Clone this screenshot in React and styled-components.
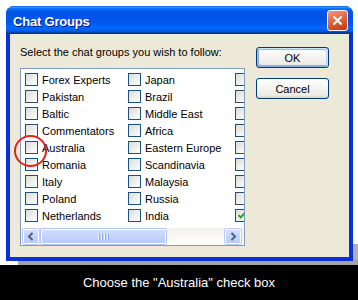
import React from 'react';
import styled, { createGlobalStyle } from 'styled-components';

const GlobalStyle = createGlobalStyle`
  html, body {
    margin: 0;
    padding: 0;
    background: #fff;
  }
  body {
    width: 358px;
    height: 300px;
    overflow: hidden;
    font-family: "Liberation Sans", Arial, sans-serif;
  }
`;

const Stage = styled.div`
  position: relative;
  height: 265px;
  padding: 6px 0 0 6px;
  box-sizing: border-box;
  background-color: #fff;
  background-image: linear-gradient(#a4a4a4, #a4a4a4), linear-gradient(#b0b0b0, #b0b0b0);
  background-repeat: no-repeat;
  background-position: 18px 259px, 353px 244px;
  background-size: 340px 6px, 5px 21px;
`;

const Window = styled.div`
  width: 347px;
  height: 255px;
  display: flex;
  flex-direction: column;
  background: #0831d9;
  border-radius: 8px 8px 0 0;
  overflow: hidden;
`;

const TitleBar = styled.div`
  height: 28px;
  flex: none;
  display: flex;
  align-items: center;
  justify-content: space-between;
  padding: 0 5px 0 7px;
  background: linear-gradient(
    180deg,
    #0058ee 0%,
    #3593ff 4%,
    #288eff 6%,
    #127dff 8%,
    #036ffc 10%,
    #0262ee 14%,
    #0057e5 20%,
    #0054e3 24%,
    #0055eb 56%,
    #005bf5 66%,
    #026afe 76%,
    #0062ef 86%,
    #0052d6 92%,
    #0040ab 94%,
    #003092 100%
  );
`;

const Title = styled.span`
  padding-top: 2px;
  color: #fff;
  font-size: 13px;
  font-weight: bold;
  letter-spacing: -0.2px;
  text-shadow: 1px 1px #0f1089;
`;

const CloseButton = styled.div`
  width: 21px;
  height: 21px;
  box-sizing: border-box;
  border: 1px solid #fff;
  border-radius: 3px;
  display: flex;
  align-items: center;
  justify-content: center;
  background: radial-gradient(circle at 90% 90%, #cc4600 0%, #dc6527 55%, #cd7546 70%, #ffccb2 90%, #fff 100%);
  background: linear-gradient(160deg, #f19a78 0%, #e06f48 40%, #cf4d24 75%, #b93812 100%);
`;

const Body = styled.div`
  flex: 1;
  margin: 0 4px 4px;
  display: flex;
  padding: 12px 0 0 10px;
  background: #ece9d8;
`;

const MainColumn = styled.div`
  display: flex;
  flex-direction: column;
`;

const Prompt = styled.div`
  font-size: 11px;
  line-height: 13px;
  color: #000;
  margin-bottom: 9px;
`;

const ListBox = styled.div`
  width: 225px;
  height: 178px;
  box-sizing: border-box;
  border: 1px solid #7f9db9;
  background: #fff;
  display: flex;
  flex-direction: column;
  overflow: hidden;
`;

const Items = styled.div`
  flex: 1;
  display: grid;
  grid-auto-flow: column;
  grid-template-rows: repeat(9, 17px);
  grid-template-columns: 103px 107px 60px;
  padding: 2px 0 0 4px;
  overflow: hidden;
`;

const Item = styled.label`
  display: flex;
  align-items: center;
  gap: 4px;
  height: 17px;
  font-size: 11px;
  color: #000;
  white-space: nowrap;
`;

const Box = styled.span`
  width: 13px;
  height: 13px;
  flex: none;
  box-sizing: border-box;
  border: 1px solid #1c5180;
  background: linear-gradient(135deg, #dcdcd7, #fff);
  display: flex;
  align-items: center;
  justify-content: center;
`;

const Scrollbar = styled.div`
  height: 17px;
  flex: none;
  display: flex;
  align-items: center;
  padding: 0 2px 0 1px;
  background: linear-gradient(180deg, #f3f1ec, #fefefb);
`;

const ScrollButton = styled.div`
  width: 16px;
  height: 15px;
  box-sizing: border-box;
  border: 1px solid #fff;
  border-radius: 2px;
  box-shadow: 0 0 0 1px #b7caf5;
  background: linear-gradient(180deg, #d2defd, #b9cbf8);
  display: flex;
  align-items: center;
  justify-content: center;
  margin: 0 1px;
`;

const Thumb = styled.div`
  width: ${(p) => p.$width}px;
  height: 15px;
  box-sizing: border-box;
  border: 1px solid #fff;
  border-radius: 2px;
  box-shadow: 0 0 0 1px #b0c5f3;
  background: linear-gradient(180deg, #cfdcfd, #b8cbf9);
  display: flex;
  align-items: center;
  justify-content: center;
  gap: 1px;
  margin-left: 1px;
`;

const Grip = styled.span`
  width: 1px;
  height: 6px;
  background: #eef3fe;
  box-shadow: 1px 0 #8ca6e4;
  margin-right: 1px;
`;

const Spacer = styled.div`
  flex: 1;
`;

const ButtonColumn = styled.div`
  display: flex;
  flex-direction: column;
  gap: 10px;
  margin: 1px 0 0 11px;
`;

const Button = styled.button`
  width: 73px;
  height: 21px;
  box-sizing: border-box;
  padding: 0;
  border: 1px solid #003c74;
  border-radius: 3px;
  background: linear-gradient(180deg, #fff, #ecebe6 86%, #d6d0c5);
  font-family: "Liberation Sans", Arial, sans-serif;
  font-size: 11px;
  color: #000;
  box-shadow: ${(p) =>
    p.$default
      ? 'inset -1px 1px #cee7ff, inset 1px 2px #98b8ea, inset -2px 2px #bcd4f6, inset 1px -1px #89ade4, inset 2px -2px #89ade4'
      : 'none'};
`;

const Caption = styled.div`
  height: 35px;
  background: #000;
  color: #fff;
  font-size: 13px;
  line-height: 35px;
  text-align: center;
`;

const Highlight = styled.div`
  position: absolute;
  left: 14px;
  top: 135px;
  width: 33px;
  height: 32px;
  box-sizing: border-box;
  border: 2px solid #e0241c;
  border-radius: 50%;
`;

const columnOne = ['Forex Experts', 'Pakistan', 'Baltic', 'Commentators', 'Australia', 'Romania', 'Italy', 'Poland', 'Netherlands'];
const columnTwo = ['Japan', 'Brazil', 'Middle East', 'Africa', 'Eastern Europe', 'Scandinavia', 'Malaysia', 'Russia', 'India'];
const columnThree = [false, false, false, false, false, false, false, false, true];

const Check = () => (
  <svg width="9" height="9" viewBox="0 0 9 9">
    <path d="M1.5 4.2 L3.6 6.4 L7.6 2.2" fill="none" stroke="#21a121" strokeWidth="1.8" />
  </svg>
);

const GroupItem = ({ name, checked }) => (
  <Item>
    <Box>{checked && <Check />}</Box>
    {name}
  </Item>
);

const ArrowLeft = () => (
  <svg width="8" height="9" viewBox="0 0 8 9">
    <path d="M5.5 1 L2 4.5 L5.5 8" fill="none" stroke="#4d6185" strokeWidth="2" />
  </svg>
);

const ArrowRight = () => (
  <svg width="8" height="9" viewBox="0 0 8 9">
    <path d="M2.5 1 L6 4.5 L2.5 8" fill="none" stroke="#4d6185" strokeWidth="2" />
  </svg>
);

const App = () => {
  return (
    <>
      <GlobalStyle />
      <Stage>
        <Window>
          <TitleBar>
            <Title>Chat Groups</Title>
            <CloseButton>
              <svg width="11" height="11" viewBox="0 0 11 11">
                <path d="M1.5 1.5 L9.5 9.5 M9.5 1.5 L1.5 9.5" stroke="#fff" strokeWidth="2" />
              </svg>
            </CloseButton>
          </TitleBar>
          <Body>
            <MainColumn>
              <Prompt>Select the chat groups you wish to follow:</Prompt>
              <ListBox>
                <Items>
                  {columnOne.map((name) => (
                    <GroupItem key={name} name={name} />
                  ))}
                  {columnTwo.map((name) => (
                    <GroupItem key={name} name={name} />
                  ))}
                  {columnThree.map((checked, i) => (
                    <GroupItem key={'c3-' + i} checked={checked} />
                  ))}
                </Items>
                <Scrollbar>
                  <ScrollButton>
                    <ArrowLeft />
                  </ScrollButton>
                  <Thumb $width={125}>
                    <Grip />
                    <Grip />
                    <Grip />
                    <Grip />
                  </Thumb>
                  <Spacer />
                  <ScrollButton>
                    <ArrowRight />
                  </ScrollButton>
                </Scrollbar>
              </ListBox>
            </MainColumn>
            <ButtonColumn>
              <Button $default>OK</Button>
              <Button>Cancel</Button>
            </ButtonColumn>
          </Body>
        </Window>
        <Highlight />
      </Stage>
      <Caption>Choose the "Australia" check box</Caption>
    </>
  );
};

export default App;
